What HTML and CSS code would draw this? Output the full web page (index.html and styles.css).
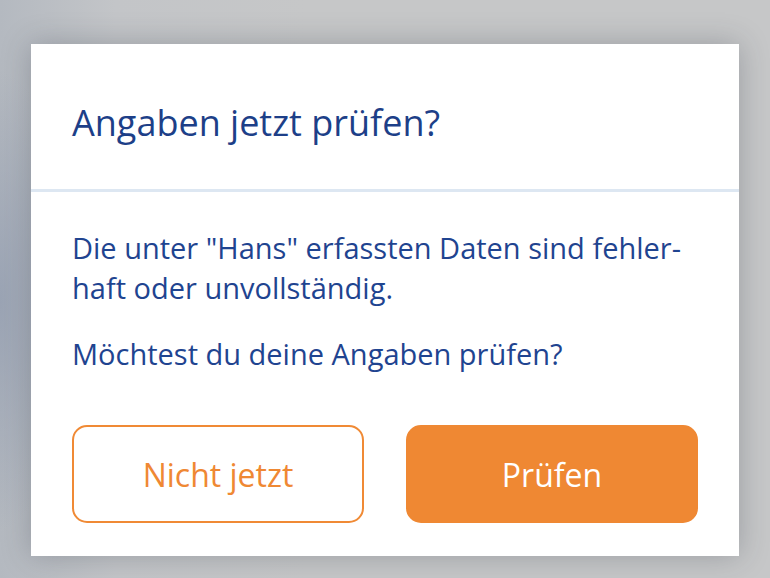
FILE: index.html
```html
<!DOCTYPE html>
<html lang="de">
<head>
<meta charset="utf-8">
<title>Angaben jetzt prüfen?</title>
<link rel="stylesheet" href="styles.css">
</head>
<body>
<div class="backdrop">
  <div class="dialog" role="dialog">
    <div class="dialog-header">
      <h1 class="dialog-title">Angaben jetzt prüfen?</h1>
    </div>
    <div class="dialog-body">
      <p class="dialog-text">Die unter "Hans" erfassten Daten sind fehler-<br>haft oder unvollständig.</p>
      <p class="dialog-text dialog-question">Möchtest du deine Angaben prüfen?</p>
      <div class="dialog-actions">
        <button class="btn btn-outline">Nicht jetzt</button>
        <button class="btn btn-primary">Prüfen</button>
      </div>
    </div>
  </div>
</div>
</body>
</html>
```
FILE: styles.css
```css
html, body {
  margin: 0;
  padding: 0;
  height: 100%;
}
body {
  background: #c5c6c8;
  overflow: hidden;
}
.backdrop {
  height: 100%;
  background:
    radial-gradient(ellipse 70px 230px at 0 52%, rgba(150, 160, 178, 0.85), rgba(150, 160, 178, 0) 100%),
    linear-gradient(to right, #b4b9c0 0%, #c3c5c8 15%, #c6c7c8 40%, #c6c7c8 100%);
  padding-top: 44px;
  padding-left: 31px;
  box-sizing: border-box;
}
.dialog {
  width: 708px;
  background: #ffffff;
  box-shadow: 0 0 28px rgba(40, 45, 60, 0.28);
}
.dialog-header {
  height: 148px;
  padding: 59px 41px 0 41px;
  box-sizing: border-box;
  border-bottom: 3px solid #dde7f2;
}
.dialog-title {
  margin: 0;
  font-family: "Open Sans", "Noto Sans", sans-serif;
  font-weight: 400;
  font-size: 36px;
  line-height: 40px;
  color: #1d3f88;
}
.dialog-body {
  padding: 36px 41px 33px 41px;
}
.dialog-text {
  margin: 0;
  font-family: "Open Sans", "Noto Sans", sans-serif;
  font-size: 29px;
  line-height: 40px;
  color: #1f4490;
}
.dialog-question {
  margin-top: 26px;
}
.dialog-actions {
  display: flex;
  gap: 42px;
  margin-top: 51px;
}
.btn {
  flex: 1;
  height: 98px;
  border-radius: 15px;
  font-family: "Open Sans", "Noto Sans", sans-serif;
  font-size: 32px;
  font-weight: 400;
  cursor: pointer;
  box-sizing: border-box;
}
.btn-outline {
  background: #ffffff;
  border: 2px solid #f08a35;
  color: #ef8833;
}
.btn-primary {
  background: #ef8833;
  border: 2px solid #ef8833;
  color: #ffffff;
}
```
